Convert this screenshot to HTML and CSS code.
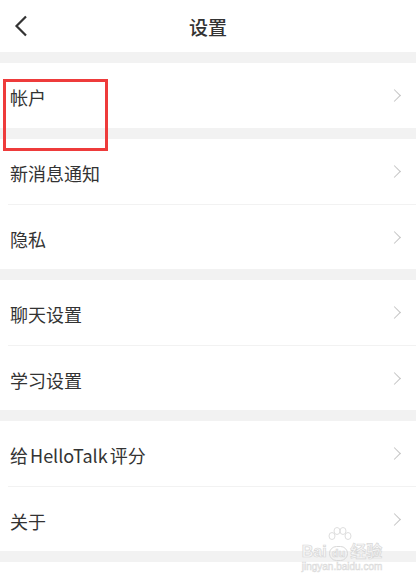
FILE: index.html
```html
<!DOCTYPE html>
<html>
  <head>
    <meta charset="UTF-8">
    <title>设置</title>
    <link rel="stylesheet" href="styles.css">
  </head>
  <body>
    <div class="page">
      <header class="topbar">
        <svg class="back" width="14" height="22" viewBox="0 0 14 22">
          <polyline points="12,1.5 2.5,11 12,20.5" fill="none" stroke="#333" stroke-width="2.2" stroke-linejoin="miter"/>
        </svg>
        <h1>设置</h1>
      </header>

      <div class="gap"></div>
      <ul class="group">
        <li class="row"><span>帐户</span><i class="arrow"></i></li>
      </ul>

      <div class="gap"></div>
      <ul class="group">
        <li class="row"><span>新消息通知</span><i class="arrow"></i></li>
        <li class="row"><span>隐私</span><i class="arrow"></i></li>
      </ul>

      <div class="gap"></div>
      <ul class="group">
        <li class="row"><span>聊天设置</span><i class="arrow"></i></li>
        <li class="row"><span>学习设置</span><i class="arrow"></i></li>
      </ul>

      <div class="gap"></div>
      <ul class="group">
        <li class="row"><span class="tight">给 HelloTalk 评分</span><i class="arrow"></i></li>
        <li class="row"><span>关于</span><i class="arrow"></i></li>
      </ul>
      <div class="gap"></div>

      <!-- highlight drawn over the account row -->
      <div class="mark"></div>

      <div class="watermark">
        <svg class="paw" width="30" height="22" viewBox="0 0 30 22">
          <g fill="none" stroke="#dedede" stroke-width="1">
            <ellipse cx="8" cy="9" rx="3" ry="3.5"/>
            <ellipse cx="13" cy="4" rx="3" ry="3.5"/>
            <ellipse cx="19" cy="4" rx="3" ry="3.5"/>
            <ellipse cx="24" cy="9" rx="3" ry="3.5"/>
          </g>
        </svg>
        <div class="wm-main">Bai<span class="du">du</span>经验</div>
        <div class="wm-url">jingyan.baidu.com</div>
      </div>
    </div>
  </body>
</html>
```

FILE: styles.css
```css
body {
  margin: 0;
  background-color: #fff;
  font-family: "Noto Sans CJK SC", "Noto Sans", sans-serif;
  color: #333;
}

.page {
  position: relative;
  width: 416px;
  height: 583px;
  overflow: hidden;
}

.topbar {
  height: 52px;
  display: flex;
  align-items: center;
  justify-content: center;
  position: relative;
}

.topbar h1 {
  margin: 0;
  font-size: 19px;
  font-weight: 500;
  color: #333;
}

.back {
  position: absolute;
  left: 14px;
  top: 15px;
}

.gap {
  height: 11px;
  background-color: #f2f2f2;
}

.group {
  list-style: none;
  margin: 0;
  padding: 0;
}

.row {
  height: 65px;
  display: flex;
  align-items: center;
  justify-content: space-between;
  padding: 0 14px 0 10px;
  margin-left: 0;
  font-size: 18px;
  color: #333;
  box-sizing: border-box;
}

.row span {
  padding-top: 3px;
}

.row .tight {
  word-spacing: -2px;
}

.row + .row {
  border-top: 1px solid #f2f2f2;
  margin-left: 8px;
  padding-left: 2px;
}

.arrow {
  width: 8px;
  height: 8px;
  border-top: 1.6px solid #c4c4c4;
  border-right: 1.6px solid #c4c4c4;
  transform: rotate(45deg);
  margin-right: 3px;
}

.mark {
  position: absolute;
  left: 3px;
  top: 79px;
  width: 105px;
  height: 72px;
  border: 3px solid #ee3b3b;
  box-sizing: border-box;
}

.watermark {
  position: absolute;
  left: 296px;
  top: 527px;
  width: 92px;
  text-align: center;
  font-family: "Liberation Sans", "Noto Sans CJK SC", sans-serif;
}

.paw {
  display: block;
  margin: 0 0 -6px 28px;
}

.wm-main {
  font-size: 16px;
  font-weight: bold;
  color: #f7f7f7;
  -webkit-text-stroke: 0.7px #d8d8d8;
  line-height: 18px;
}

.du {
  display: inline-block;
  font-size: 11px;
  border: 1px solid #d8d8d8;
  border-radius: 8px;
  padding: 0 2px;
  margin: 0 2px;
  line-height: 13px;
}

.wm-url {
  font-size: 10px;
  color: #f2f2f2;
  -webkit-text-stroke: 0.5px #dadada;
  line-height: 12px;
}
```
